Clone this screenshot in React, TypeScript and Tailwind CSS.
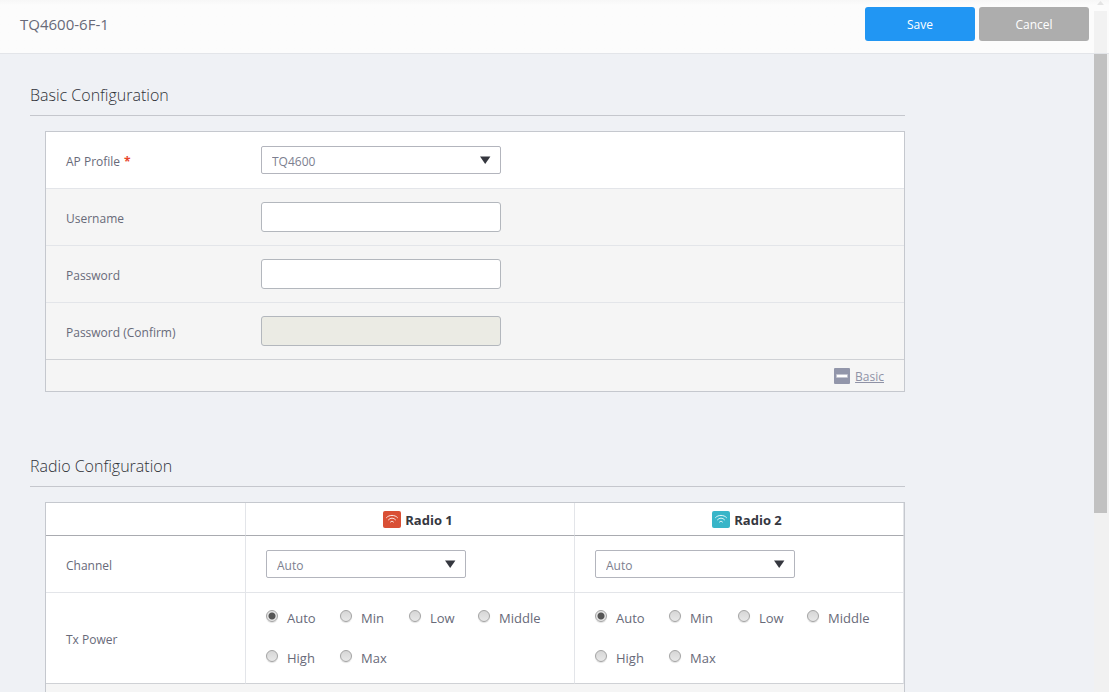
import React from 'react';
import { useState } from 'react';
import clsx from 'clsx';

const POWER_LEVELS = ['Auto', 'Min', 'Low', 'Middle', 'High', 'Max'];

const RADIOS = [
    { id: 'radio1', name: 'Radio 1', color: 'bg-[#d94f35]' },
    { id: 'radio2', name: 'Radio 2', color: 'bg-[#38b5c8]' },
];

function Select({
    id,
    label,
    options,
    className,
}: {
    id: string;
    label?: string;
    options: string[];
    className: string;
}) {
    return (
        <div className={clsx('relative', className)}>
            <select
                id={id}
                aria-label={label}
                className="block w-full h-7 appearance-none rounded-xs border border-[#b3b5bd] bg-white pl-[10px] pr-7 pt-1 text-xs text-[#7d7f90]"
            >
                {options.map((option) => (
                    <option key={option}>{option}</option>
                ))}
            </select>
            <svg
                className="absolute right-[10px] top-[10px] pointer-events-none"
                width="11"
                height="8"
                viewBox="0 0 11 8"
            >
                <path d="M0 0.5h10.4L5.2 8z" fill="#35373f" />
            </svg>
        </div>
    );
}

function Section({
    title,
    children,
}: {
    title: string;
    children: React.ReactNode;
}) {
    return (
        <section className="w-full max-w-[875px] mb-[63px]">
            <h2 className="pb-2 border-b border-[#c5c7cd] text-base leading-[23px] font-light text-[#2f3238]">
                {title}
            </h2>
            <div className="mt-[15px] ml-[15px] border border-[#c5c8ce] bg-white">
                {children}
            </div>
        </section>
    );
}

function FormRow({
    id,
    label,
    required,
    className,
    children,
}: {
    id: string;
    label: string;
    required?: boolean;
    className?: string;
    children: React.ReactNode;
}) {
    return (
        <div
            className={clsx('flex items-center h-[57px] border-b pl-5', className)}
        >
            <label htmlFor={id} className="w-[195px] shrink-0 pt-1 text-xs leading-5">
                {label}
                {required && (
                    <span className="ml-1 font-bold text-[#e8452c]">*</span>
                )}
            </label>
            {children}
        </div>
    );
}

function WifiIcon({ className }: { className: string }) {
    return (
        <span className={clsx('w-[18px] h-[17px] rounded-xs', className)}>
            <svg
                width="18"
                height="17"
                viewBox="0 0 18 17"
                fill="none"
                stroke="#fff"
                strokeOpacity="0.85"
                strokeLinecap="round"
            >
                <path d="M3.5 6.6C6 3.6 12 3.6 14.5 6.6" />
                <path d="M5.5 8.8C7.5 6.6 10.5 6.6 12.5 8.8" />
                <path d="M7.5 11C8.3 10 9.7 10 10.5 11" />
            </svg>
        </span>
    );
}

function TxPower({ name }: { name: string }) {
    const [level, setLevel] = useState<string>('Auto');

    return (
        <div className="grid grid-cols-[74px_69px_69px_1fr] pl-5">
            {POWER_LEVELS.map((item) => (
                <label key={item} className="flex items-center h-10">
                    <input
                        type="radio"
                        name={name}
                        checked={level === item}
                        onChange={() => setLevel(item)}
                        className="appearance-none shrink-0 size-3 mr-[9px] mb-1 rounded-full border border-[#a3a3a3] bg-linear-to-b from-[#d6d6d6] to-[#e8e8e8] shadow-[0_1px_1px_#e0e0e0] checked:bg-[radial-gradient(circle,#555_0,#555_3px,#e6e6e6_4px)]"
                    />
                    {item}
                </label>
            ))}
        </div>
    );
}

export default function App() {
    const [open, setOpen] = useState<boolean>(true);
    const inputStyle =
        'w-[240px] h-[30px] rounded-[3px] border border-[#b3b7bd] bg-white px-2 disabled:bg-[#ebebe4]';

    return (
        <div className="flex flex-col h-screen overflow-hidden bg-[#eff1f5] font-['Open_Sans','Noto_Sans',sans-serif] text-[13px] leading-5 text-[#686a79]">
            <header className="flex shrink-0 h-[54px] border-b border-[#e3e5e9] bg-linear-to-b from-[#f7f7f7] to-[#fcfcfc] to-10%">
                <div className="flex flex-1 items-start gap-1 pl-5 pr-[5px] pt-[7px]">
                    <h1 className="flex-1 text-[15px] leading-[34px]">TQ4600-6F-1</h1>
                    <button className="w-[110px] h-[34px] pt-[2px] rounded-[3px] bg-[#2196f3] text-xs font-medium text-white">
                        Save
                    </button>
                    <button className="w-[110px] h-[34px] pt-[2px] rounded-[3px] bg-[#adadad] text-xs font-medium text-white">
                        Cancel
                    </button>
                </div>
                <div className="flex flex-col items-center w-[15px] pr-[2px]">
                    <svg className="h-[11px]" width="7" height="11">
                        <path d="M0 5h7L3.5 1z" fill="#e4e4e4" />
                    </svg>
                    <div className="w-full flex-1 bg-[#f2f2f2]" />
                </div>
            </header>

            <div className="flex flex-1 min-h-0">
                <main className="flex-1 overflow-y-auto [scrollbar-width:none] px-[30px] pt-[30px]">
                    <Section title="Basic Configuration">
                        <FormRow
                            id="profile"
                            label="AP Profile"
                            required
                            className="border-[#e3e5e9]"
                        >
                            <Select
                                id="profile"
                                options={['TQ4600']}
                                className="w-[240px]"
                            />
                        </FormRow>
                        {open && (
                            <div className="bg-[#f5f5f5]">
                                <FormRow
                                    id="username"
                                    label="Username"
                                    className="border-[#e3e5e9]"
                                >
                                    <input id="username" className={inputStyle} />
                                </FormRow>
                                <FormRow
                                    id="password"
                                    label="Password"
                                    className="border-[#e3e5e9]"
                                >
                                    <input
                                        id="password"
                                        type="password"
                                        className={inputStyle}
                                    />
                                </FormRow>
                                <FormRow
                                    id="confirm"
                                    label="Password (Confirm)"
                                    className="border-[#cfd1d5]"
                                >
                                    <input
                                        id="confirm"
                                        type="password"
                                        disabled
                                        className={inputStyle}
                                    />
                                </FormRow>
                            </div>
                        )}
                        <div className="flex items-center justify-end h-[31px] pr-5 bg-[#f5f5f5]">
                            <a
                                href="#basic"
                                onClick={() => setOpen(!open)}
                                className="flex items-center gap-[5px] text-xs leading-5 text-[#8f92a6]"
                            >
                                <svg width="16" height="16">
                                    <rect width="16" height="16" rx="1" fill="#9296aa" />
                                    <rect x="2" y="6" width="12" height="4" rx="1" fill="#c4c6d1" />
                                    <rect x="3" y="7" width="10" height="2" fill="#fff" />
                                </svg>
                                <span className="pt-[2px] underline">Basic</span>
                            </a>
                        </div>
                    </Section>

                    <Section title="Radio Configuration">
                        <table className="w-full table-fixed border-separate border-spacing-0">
                            <thead>
                                <tr className="h-[33px] text-[#35373f]">
                                    <td className="w-[200px] border-r border-b border-r-[#e3e5e9] border-b-[#a9abb0]" />
                                    {RADIOS.map((radio) => (
                                        <th
                                            key={radio.id}
                                            scope="col"
                                            className="p-0 pl-4 border-r border-b border-r-[#e3e5e9] border-b-[#a9abb0]"
                                        >
                                            <div className="flex items-center justify-center gap-1">
                                                <WifiIcon className={radio.color} />
                                                <span className="pt-[2px]">{radio.name}</span>
                                            </div>
                                        </th>
                                    ))}
                                </tr>
                            </thead>
                            <tbody>
                                <tr className="h-[57px]">
                                    <th
                                        scope="row"
                                        className="p-0 pl-5 pt-1 border-r border-b border-[#e3e5e9] text-left text-xs leading-5 font-normal"
                                    >
                                        Channel
                                    </th>
                                    {RADIOS.map((radio) => (
                                        <td
                                            key={radio.id}
                                            className="p-0 pl-5 border-r border-b border-[#e3e5e9]"
                                        >
                                            <Select
                                                id={`${radio.id}-channel`}
                                                label={`${radio.name} channel`}
                                                options={['Auto']}
                                                className="w-[200px]"
                                            />
                                        </td>
                                    ))}
                                </tr>
                                <tr className="h-[91px]">
                                    <th
                                        scope="row"
                                        className="p-0 pl-5 pt-1 border-r border-b border-r-[#e3e5e9] border-b-[#cfd1d5] text-left text-xs leading-5 font-normal"
                                    >
                                        Tx Power
                                    </th>
                                    {RADIOS.map((radio) => (
                                        <td
                                            key={radio.id}
                                            className="p-0 border-r border-b border-r-[#e3e5e9] border-b-[#cfd1d5]"
                                        >
                                            <TxPower name={`${radio.id}-power`} />
                                        </td>
                                    ))}
                                </tr>
                            </tbody>
                        </table>
                        <div className="h-8 bg-[#f5f5f5]" />
                    </Section>
                </main>

                {/* scrollbar */}
                <div className="w-[15px] pr-[2px] bg-[#f1f1f1]">
                    <div className="h-[72%] bg-[#c1c1c1]" />
                </div>
            </div>
        </div>
    );
}
